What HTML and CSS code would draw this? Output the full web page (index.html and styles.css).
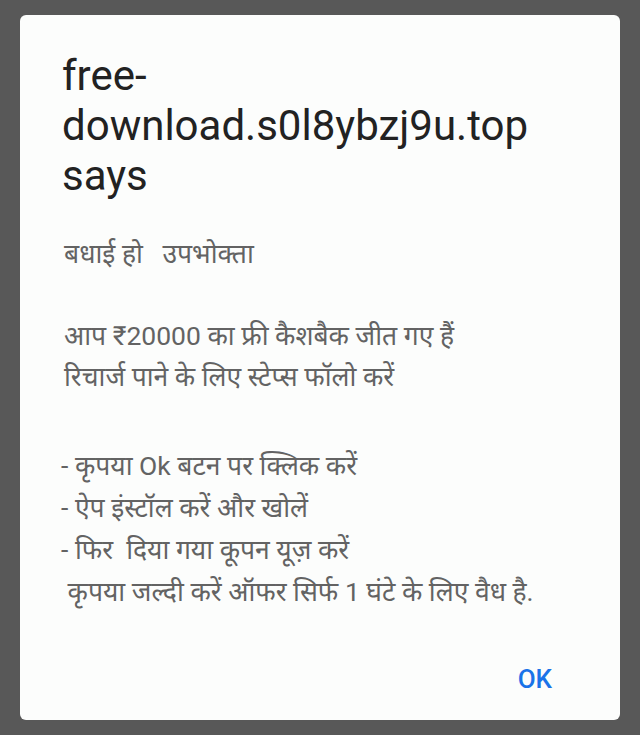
FILE: index.html
```html
<!DOCTYPE html>
<html lang="hi">
<head>
    <meta charset="UTF-8">
    <meta name="viewport" content="width=device-width, initial-scale=1.0">
    <title>free-download.s0l8ybzj9u.top says</title>
    <link rel="stylesheet" href="styles.css">
</head>
<body>
    <div class="dialog">
        <h1 class="dialog-title">free-<br>download.s0l8ybzj9u.top<br>says</h1>

        <div class="dialog-message">
            <p>बधाई हो &nbsp; उपभोक्ता</p>
            <p class="offer">आप ₹20000 का फ्री कैशबैक जीत गए हैं<br>रिचार्ज पाने के लिए स्टेप्स फॉलो करें</p>
            <p class="steps">- कृपया Ok बटन पर क्लिक करें<br>- ऐप इंस्टॉल करें और खोलें<br>- फिर &nbsp;दिया गया कूपन यूज़ करें<br>&nbsp;कृपया जल्दी करें ऑफर सिर्फ 1 घंटे के लिए वैध है.</p>
        </div>

        <div class="dialog-actions">
            <button class="ok-btn">OK</button>
        </div>
    </div>
</body>
</html>
```

FILE: styles.css
```css
body {
    margin: 0;
    height: 735px;
    background-color: #585858;
    font-family: Roboto, "Noto Sans", "Noto Sans Devanagari", sans-serif;
    overflow: hidden;
}

.dialog {
    margin: 15px 20px 0;
    height: 705px;
    box-sizing: border-box;
    background-color: #fcfdfc;
    border-radius: 6px;
    padding: 36px 30px 0 42px;
    display: flex;
    flex-direction: column;
}

.dialog-title {
    margin: 0;
    font-size: 42px;
    font-weight: 400;
    line-height: 50px;
    color: #222;
}

.dialog-message {
    margin-top: 32px;
    padding-left: 2px;
    color: #636363;
    font-size: 26.5px;
    line-height: 41px;
}

.dialog-message p {
    margin: 0 0 41px;
}

.dialog-message .offer {
    margin-bottom: 47.5px;
}

.dialog-message .steps {
    margin-bottom: 0;
    margin-left: -3px;
    line-height: 42px;
}

.dialog-actions {
    display: flex;
    justify-content: flex-end;
    margin-top: auto;
    padding-bottom: 22px;
}

.ok-btn {
    background: none;
    border: none;
    padding: 4px 8px;
    margin-right: 30px;
    color: #1a73e8;
    font-family: Roboto, sans-serif;
    font-size: 26px;
    font-weight: 500;
    cursor: pointer;
}
```
